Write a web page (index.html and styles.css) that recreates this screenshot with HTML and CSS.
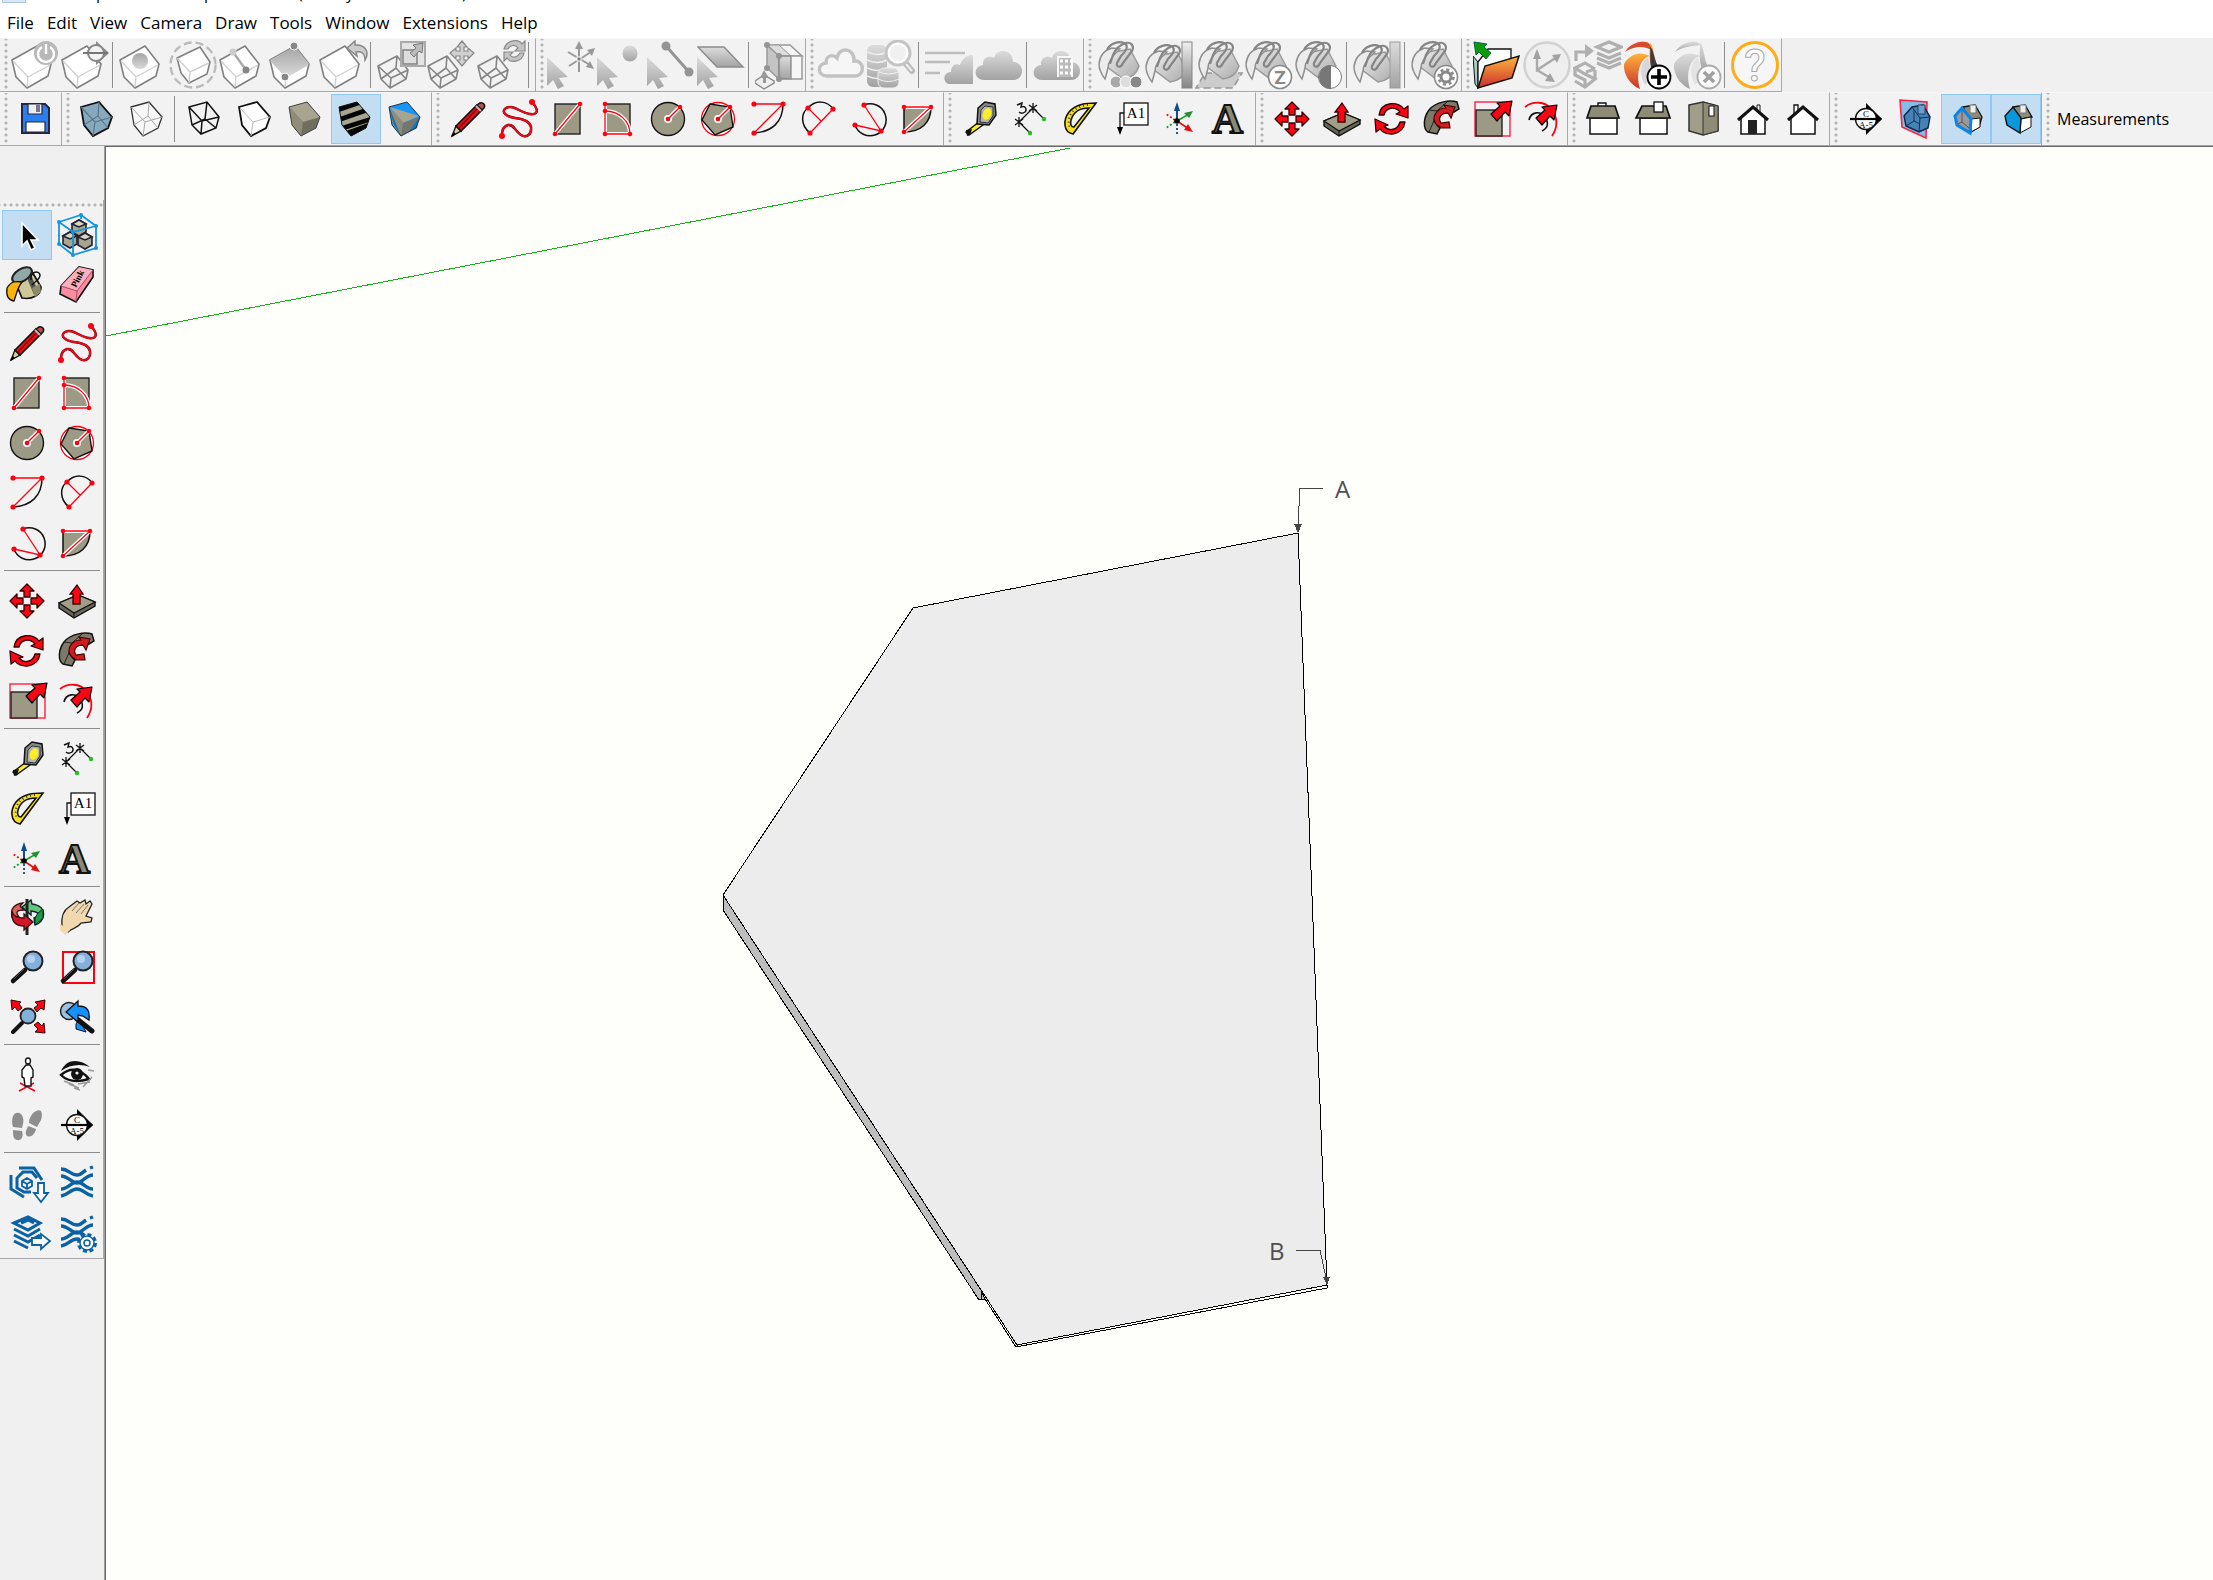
FILE: index.html
```html
<!DOCTYPE html>
<html lang="en">
<head>
<meta charset="utf-8">
<title>Modeler</title>
<link rel="stylesheet" href="styles.css">
</head>
<body>
<svg class="sprite" aria-hidden="true">
<defs>
<linearGradient id="gg" x1="0" y1="0" x2="0" y2="1"><stop offset="0" stop-color="#dcdcdc"/><stop offset="1" stop-color="#a2a2a2"/></linearGradient>
<linearGradient id="gb" x1="0" y1="0" x2="1" y2="1"><stop offset="0" stop-color="#eeeeee"/><stop offset="1" stop-color="#aaaaaa"/></linearGradient>
<linearGradient id="gd" x1="0" y1="0" x2="0" y2="1"><stop offset="0" stop-color="#f0f0f0"/><stop offset="1" stop-color="#858585"/></linearGradient>
<linearGradient id="gt" x1="0" y1="0" x2="0" y2="1"><stop offset="0" stop-color="#a4a4a4"/><stop offset="1" stop-color="#dadada"/></linearGradient>
<linearGradient id="gf" x1="0" y1="0" x2="0" y2="1"><stop offset="0" stop-color="#ffb43c"/><stop offset="1" stop-color="#c9302c"/></linearGradient>
<clipPath id="cubeclip"><path d="M8 13L26 8L39 23L35 34L20 42L11 31Z"/></clipPath>

<g id="cubeg"><path d="M1 20L26 6L40 24L37 36L16 48L5 37Z" fill="#fff" stroke="#808080" stroke-width="1.6" stroke-linejoin="round"/><path d="M2 21L17 37L39 25M17 37L16 47" fill="none" stroke="#d0d0d0" stroke-width="1.4"/></g>
<g id="wireg" fill="none" stroke="#858585" stroke-width="1.6" stroke-linejoin="round"><path d="M1 26L20 16L31 30L29 39L13 48L4 39ZM1 26L14 38L31 30M14 38L13 48M20 16L19 28L4 39M19 28L29 39"/></g>
<g id="cursorg"><path d="M0 17V46L6 40L11 49L17 46L12 38L21 37Z" fill="url(#gg)"/></g>
<g id="bucketg"><path d="M11 26L20 12L35 9L44 26C42 33 36 38 28 39Z" fill="url(#gb)" stroke="#999" stroke-width="1.4"/><path d="M4 24C5 15 9 10 17 8L25 9C17 16 13 22 13 28C12 32 11 36 10 39C7 35 4 29 4 24Z" fill="#ececec" stroke="#909090" stroke-width="1.5"/><path d="M12 10C15 3 24 1 29 3C35 6 30 12 26 16L22 23C21 28 26 28 28 23L37 11C40 5 35 2 31 3C24 5 20 10 18 15L15 24" fill="none" stroke="#858585" stroke-width="2.2"/></g>
<g id="vg"><path d="M2 12C10 0 26 0 27 5C19 6 9 7 2 12Z"/><path d="M1 24C6 15 16 10 27 16C18 18 12 32 17 49C7 45 0 34 1 24Z"/><path d="M27 3C31 5 31 22 36 28L31 32C25 24 27 12 27 3Z"/></g>
<path id="redarrow" d="M45 7L42 22L38 18L30 27L24 20L33 12L30 9Z" fill="#fa0514" stroke="#000" stroke-width="1.2" stroke-linejoin="round"/>
<path id="cloud" d="M9 38C-2 38-2 24 8 23C7 15 15 13 19 16C21 6 38 6 38 20C50 20 50 38 38 38Z"/>
</defs>

<symbol id="solid-toggle" viewBox="0 0 50 50"><use href="#cubeg"/><circle cx="35" cy="13" r="12" fill="#b8b8b8"/><path d="M31 7A8 8 0 1 0 39 7M35 4V14" fill="none" stroke="#fff" stroke-width="2.4"/></symbol>
<symbol id="solid-section" viewBox="0 0 50 50"><use href="#cubeg"/><path d="M35 1L48 13L35 25Z" fill="#888"/><circle cx="35" cy="13" r="8" fill="#f4f4f4" stroke="#888" stroke-width="2"/><path d="M22 13H47" stroke="#777" stroke-width="2"/></symbol>
<symbol id="solid-sphere" viewBox="0 0 50 50"><use href="#cubeg"/><circle cx="21" cy="21" r="8" fill="url(#gt)"/></symbol>
<symbol id="solid-outer" viewBox="0 0 50 50"><circle cx="24" cy="25" r="22.500" fill="none" stroke="#bbb" stroke-width="2.400" stroke-dasharray="8 4"/><path d="M8 18L31 7L41 22L38 34L20 43L12 33Z" fill="#fff" stroke="#808080" stroke-width="1.600"/><path d="M8 18L21 32L40 23M21 32L20 43" fill="none" stroke="#ccc" stroke-width="1.400"/></symbol>
<symbol id="solid-edge" viewBox="0 0 50 50"><use href="#cubeg"/><path d="M14 12L27 30" stroke="#aaa" stroke-width="2.400"/><circle cx="14" cy="12" r="3.500" fill="#ccc"/><circle cx="27" cy="30" r="3.500" fill="#858585"/></symbol>
<symbol id="solid-face" viewBox="0 0 50 50"><use href="#cubeg"/><path d="M1 20L26 6L40 24L17 37Z" fill="url(#gt)"/><g fill="#888" stroke="#fff"><circle cx="25" cy="6" r="4"/><circle cx="16" cy="37" r="4"/></g></symbol>
<symbol id="solid-undo" viewBox="0 0 50 50"><use href="#cubeg"/><path d="M28 8L36 1V5C46 4 51 12 46 20C46 13 42 11 37 12L38 16Z" fill="#ccc" stroke="#888" stroke-width="1.500"/></symbol>
<symbol id="wire-scale" viewBox="0 0 50 50"><use href="#wireg"/><rect x="24" y="2" width="24" height="24" fill="#e4e4e4" stroke="#aaa" stroke-width="2"/><rect x="26" y="10" width="14" height="14" fill="#ddd" stroke="#888" stroke-width="1.600"/><path d="M46 3L45 13L42 11L37 17L33 13L39 8L36 5Z" fill="#bbb" stroke="#777"/></symbol>
<symbol id="wire-move" viewBox="0 0 50 50"><use href="#wireg"/><path d="M35 1L40 7H37V11H41V8L47 13L41 19V16H37V20H40L35 26L30 20H33V16H29V19L23 13L29 8V11H33V7H30Z" fill="#d0d0d0" stroke="#888" stroke-width="1.200"/></symbol>
<symbol id="wire-rotate" viewBox="0 0 50 50"><use href="#wireg"/><g fill="#c4c4c4" stroke="#888" stroke-width="1.200"><path d="M27 9C30-1 42-1 45 4L48 1V11H38L41 8C38 4 33 5 31 9Z"/><path d="M47 13C45 23 33 23 30 18L27 21V12H36L33 15C36 19 41 17 43 13Z"/></g></symbol>

<symbol id="pick-axes" viewBox="0 0 50 50"><use href="#cursorg"/><g stroke="#999" stroke-width="2"><path d="M32 32V6M21 12L43 25M22 26L44 12"/></g><path d="M32 1L36 9H28ZM48 8L45 16L40 10ZM47 29L39 27L43 21Z" fill="#999"/><rect x="30" y="17" width="4" height="4" fill="#777" stroke="#fff"/></symbol>
<symbol id="pick-point" viewBox="0 0 50 50"><use href="#cursorg"/><ellipse cx="33" cy="13.500" rx="7.500" ry="8" fill="url(#gg)"/></symbol>
<symbol id="pick-edge" viewBox="0 0 50 50"><use href="#cursorg"/><path d="M19 6L42 32" stroke="#949494" stroke-width="3"/><circle cx="19" cy="6" r="4.500" fill="#949494"/><circle cx="42" cy="32" r="4.500" fill="#949494"/></symbol>
<symbol id="pick-face" viewBox="0 0 50 50"><use href="#cursorg"/><path d="M1 7H27L46 27H20Z" fill="url(#gg)" stroke="#8c8c8c" stroke-width="1.500"/></symbol>
<symbol id="stretch" viewBox="0 0 50 50"><path d="M12 5H35L47 16H24Z" fill="#f4f4f4" stroke="#999" stroke-width="1.500"/><path d="M12 5L24 5L36 16H24Z" fill="#ddd" stroke="#999"/><path d="M12 5L24 16V39L12 28Z" fill="#c4c4c4" stroke="#999" stroke-width="1.500"/><path d="M24 16H36V39H24Z" fill="url(#gg)" stroke="#888" stroke-width="1.500"/><path d="M36 16H47V39H36Z" fill="#f6f6f6" stroke="#999" stroke-width="1.500"/><g fill="#949494"><circle cx="12" cy="5" r="3"/><circle cx="24" cy="16" r="3"/><circle cx="12" cy="28" r="3"/><circle cx="24" cy="39" r="3"/></g><path d="M0 41L9 35L19 41V43L9 49L0 43Z" fill="#eee" stroke="#888" stroke-width="1.400"/><path d="M9 30L14 38H11V43H8V38H5Z" fill="#999"/></symbol>

<symbol id="cloud-line" viewBox="0 0 50 50"><path d="M10 36C0 36 0 24 9 23C9 15 16 14 20 18C22 6 38 8 37 21C48 20 48 36 38 36Z" fill="#f6f6f6" stroke="#c2c2c2" stroke-width="3.400"/></symbol>
<symbol id="data-search" viewBox="0 0 50 50"><g fill="url(#gg)"><rect y="5" width="20" height="42" rx="6"/></g><path d="M0 12Q10 17 20 12M0 20Q10 25 20 20M0 28Q10 33 20 28M0 36Q10 41 20 36" stroke="#eee" stroke-width="1.500" fill="none"/><rect x="11" y="28" width="21" height="20" rx="6" fill="url(#gg)" stroke="#eee"/><path d="M11 39Q21 44 32 39M12 32Q21 36 31 32" stroke="#eee" fill="none"/><path d="M36 20L45 31" stroke="#bbb" stroke-width="6" stroke-linecap="round"/><path d="M39 24L45 31" stroke="#eee" stroke-width="2"/><circle cx="31" cy="13" r="12" fill="#fff" stroke="#c4c4c4" stroke-width="3"/><circle cx="31" cy="13" r="8" fill="#f0f0f0"/></symbol>
<symbol id="cloud-list" viewBox="0 0 50 50"><path d="M0 13H40M0 22H25M0 33H15" stroke="#bdbdbd" stroke-width="2.600"/><path d="M24 44C17 42 18 32 26 32C26 25 31 23 35 25C38 17 43 15 48 15V44Z" fill="url(#gg)"/></symbol>
<symbol id="cloud-solid" viewBox="0 0 50 50"><use href="#cloud" y="2" fill="url(#gg)"/></symbol>
<symbol id="cloud-building" viewBox="0 0 50 50"><use href="#cloud" y="2" fill="url(#gg)"/><path d="M25 37V17H39V37" fill="#bbb" stroke="#f8f8f8" stroke-width="2"/><path d="M27 21H39M27 27H39M27 33H39" stroke="#fff" stroke-width="3" stroke-dasharray="3 2"/></symbol>

<symbol id="fill-dots" viewBox="0 0 50 50"><use href="#bucketg"/><g stroke="#fff"><circle cx="21" cy="42" r="6" fill="#aaa"/><circle cx="31" cy="42" r="6" fill="#ddd"/><circle cx="41" cy="42" r="6" fill="#888"/></g></symbol>
<symbol id="fill-gradient" viewBox="0 0 50 50"><use href="#bucketg" x="-3" y="3"/><rect x="37" y="2" width="10" height="46" fill="url(#gd)" stroke="#858585"/></symbol>
<symbol id="fill-plane" viewBox="0 0 50 50"><path d="M10 33H47L38 48H1Z" fill="#ccc" stroke="#999" stroke-width="1.600" stroke-dasharray="7 4"/><use href="#bucketg"/></symbol>
<symbol id="fill-contrast" viewBox="0 0 50 50"><use href="#bucketg" x="-3"/><circle cx="35" cy="37" r="11.500" fill="#fff" stroke="#777"/><path d="M36 25V49A12 12 0 0 1 36 25Z" fill="#777"/></symbol>
<symbol id="fill-flat" viewBox="0 0 50 50"><use href="#bucketg" x="-3" y="3"/><rect x="37" y="2" width="10" height="46" fill="url(#gg)" stroke="#999"/></symbol>
<symbol id="fill-gear" viewBox="0 0 50 50"><use href="#bucketg" x="-3"/><circle cx="35" cy="37" r="11.500" fill="#fff" stroke="#888" stroke-width="1.600"/><circle cx="35" cy="37" r="5" fill="none" stroke="#888" stroke-width="3"/><circle cx="35" cy="37" r="7.500" fill="none" stroke="#888" stroke-width="2.500" stroke-dasharray="3 2.900"/></symbol>

<symbol id="folder" viewBox="0 0 50 50"><path d="M0 16L5 22V48L2 44Z" fill="#a9ccc4" stroke="#111"/><path d="M5 48V22L15 9H38V25Z" fill="#fff" stroke="#111" stroke-width="1.300"/><path d="M5 48L12 26L46 16L39 38Z" fill="url(#gf)" stroke="#111" stroke-width="1.500"/><path d="M1 2L14 4L11 7L18 13L13 19L6 12L3 15Z" fill="#0a9a0a" stroke="#064" stroke-width="1"/></symbol>
<symbol id="axes-off" viewBox="0 0 50 50"><circle cx="24" cy="25" r="22.500" fill="#efefef" stroke="#d2d2d2" stroke-width="2.600"/><path d="M14 12V30L34 17M14 30L29 39" fill="none" stroke="#aaa" stroke-width="2.400"/><path d="M14 9L18 19H10ZM38 14L34 23L29 15ZM32 42L22 41L27 33Z" fill="#a2a2a2"/></symbol>
<symbol id="layers-off" viewBox="0 0 50 50"><g fill="none" stroke="#b0b0b0" stroke-width="3.200"><path d="M3 21V12H13"/><path d="M24 7L36 2L48 7L36 12ZM24 13L36 18L48 13M24 18L36 23L48 18M24 23L36 28L48 23"/><path d="M22 29L12 23L2 28L12 34L22 39L12 47L2 41M2 29V35L12 40V46M22 29L13 32M22 38V30"/></g><path d="M12 4L21 11L12 18Z" fill="#b0b0b0"/></symbol>
<symbol id="v-add" viewBox="0 0 50 50"><g fill="url(#gf)"><use href="#vg"/></g><path d="M3 10C12 0 25 0 27 5L29 10C20 5 10 7 3 10Z" fill="#d84a30"/><path d="M27 7C31 9 31 22 36 27L31 35C26 30 28 15 27 7Z" fill="#3c3c40"/><path d="M25 17C17 22 16 36 22 45L30 36Z" fill="#d8d8dc"/><circle cx="36" cy="37" r="11.500" fill="#fff" stroke="#000" stroke-width="1.800"/><path d="M28 37H44M36 29V45" stroke="#000" stroke-width="3.600"/></symbol>
<symbol id="v-remove" viewBox="0 0 50 50"><g fill="url(#gg)"><use href="#vg"/></g><path d="M25 17C17 22 16 36 22 45L30 36Z" fill="#e4e4e4"/><circle cx="36" cy="37" r="11.500" fill="#fafafa" stroke="#aaa" stroke-width="1.800"/><path d="M31 32L41 42M41 32L31 42" stroke="#a0a0a0" stroke-width="3.600"/></symbol>

<symbol id="save" viewBox="0 0 50 50"><path d="M11 10H34L38 14V39H11Z" fill="#2a7ff0" stroke="#262640" stroke-width="2"/><path d="M17 10H31V20H17Z" fill="#eee" stroke="#262640" stroke-width="1.200"/><rect x="25" y="11" width="4" height="7" fill="#777788"/><path d="M15 28H34V38H15Z" fill="#fff" stroke="#262640" stroke-width="1.200"/></symbol>
<symbol id="cube-xray" viewBox="0 0 50 50"><path d="M8 13L26 8L39 23L35 34L20 42L11 31Z" fill="#86a9bd" stroke="#111" stroke-width="1.800"/><path d="M8 13L22 28L39 23M22 28L20 42" fill="none" stroke="#58778a" stroke-width="1.200"/><path d="M26 8L25 22L11 31M25 22L35 34" fill="none" stroke="#4e6a7c"/></symbol>
<symbol id="cube-back" viewBox="0 0 50 50"><path d="M8 13L26 8L39 23L35 34L20 42L11 31Z" fill="#f8f8f8" stroke="#333" stroke-width="1.300"/><path d="M8 13L22 28L39 23M22 28L20 42M26 8L25 22L11 31M25 22L35 34" fill="none" stroke="#aaa"/></symbol>
<symbol id="cube-wire" viewBox="0 0 50 50"><path d="M8 13L26 8L38 23L35 34L20 40L11 31ZM8 13L21 27L38 23M21 27L20 40M26 8L24 25L11 31M24 25L35 34" fill="none" stroke="#111" stroke-width="1.500"/></symbol>
<symbol id="cube-hidden" viewBox="0 0 50 50"><path d="M8 13L26 8L39 23L35 34L20 42L11 31Z" fill="#fff" stroke="#111" stroke-width="1.800"/><path d="M9 14L22 28L39 23M22 28L20 42" fill="none" stroke="#bbb"/></symbol>
<symbol id="cube-shaded" viewBox="0 0 50 50"><path d="M8 13L26 8L39 23L35 34L20 42L11 31Z" fill="#706e5e"/><path d="M8 13L26 8L39 23L22 28Z" fill="#a7a48f"/><path d="M8 13L22 28L20 42L11 31Z" fill="#8f8c78"/><path d="M8 13L26 8L39 23L35 34L20 42L11 31Z" fill="none" stroke="#444"/></symbol>
<symbol id="cube-texture" viewBox="0 0 50 50"><g clip-path="url(#cubeclip)"><rect width="50" height="50" fill="#a7a48f"/><path d="M7 16L30 8M10 25L36 16M12 34L40 25M16 39L38 31M18 43L38 35" stroke="#050505" stroke-width="4.500"/></g><path d="M8 13L26 8L39 23L35 34L20 42L11 31Z" fill="none" stroke="#111"/></symbol>
<symbol id="cube-mono" viewBox="0 0 50 50"><path d="M8 13L26 8L39 23L35 34L20 42L11 31Z" fill="#1496fa"/><path d="M9 13L38 22L22 29Z" fill="#a7a48f"/><path d="M22 29L39 23L35 34L20 42Z" fill="#78766a"/><path d="M38 23L36 34L28 38Z" fill="#0a78d0"/><path d="M8 13L12 31L20 42L22 28Z" fill="#8f8c78"/><path d="M8 13L13 31L20 42Z" fill="#1070c0"/><path d="M8 13L26 8L39 23L35 34L20 42L11 31Z" fill="none" stroke="#234"/></symbol>

<symbol id="pencil" viewBox="0 0 50 50"><path d="M9 42L13 32L18 37Z" fill="#d8d0a0" stroke="#111" stroke-width="1.300"/><path d="M13 32L34 11L39 16L18 37Z" fill="#e01014" stroke="#111" stroke-width="1.600"/><path d="M16 34L36 13" stroke="#8e0a10" stroke-width="1.600"/><path d="M34 11L37 9C40 8 43 11 41 14L39 16Z" fill="#b8504c" stroke="#111" stroke-width="1.500"/><path d="M33 12L38 17" stroke="#bbb" stroke-width="2"/><path d="M9 42L12 39" stroke="#000" stroke-width="2"/></symbol>
<symbol id="freehand" viewBox="0 0 50 50"><path d="M39 8C47 17 44 21 37 20C28 19 20 10 13 14C7 18 14 23 22 24C31 25 37 28 38 33C39 41 33 44 28 41C21 36 21 30 15 31C9 33 9 38 9 42" fill="none" stroke="#600008" stroke-width="2.500"/><path d="M39 8C47 17 44 21 37 20C28 19 20 10 13 14C7 18 14 23 22 24C31 25 37 28 38 33C39 41 33 44 28 41C21 36 21 30 15 31C9 33 9 38 9 42" fill="none" stroke="#f00818" stroke-width="1.800"/><circle cx="39" cy="8" r="3" fill="#f01"/><circle cx="9" cy="42" r="3" fill="#f01"/></symbol>
<symbol id="rect" viewBox="0 0 50 50"><rect x="12" y="10" width="25" height="30" fill="#9c9a84" stroke="#222" stroke-width="1.400"/><path d="M12 40L37 10" stroke="#fff" stroke-width="4"/><path d="M12 40L37 10" stroke="#f01" stroke-width="1.300"/><circle cx="12" cy="40" r="2.300" fill="#f01"/><circle cx="37" cy="10" r="2.300" fill="#f01"/></symbol>
<symbol id="rotrect" viewBox="0 0 50 50"><rect x="12" y="10" width="25" height="30" fill="#9c9a84" stroke="#222" stroke-width="1.400"/><path d="M12 10V40H37C37 27 26 17 12 17" fill="none" stroke="#fff" stroke-width="4"/><path d="M12 10V40H37C37 27 26 17 12 17" fill="none" stroke="#f01" stroke-width="1.300"/><g fill="#f01"><circle cx="12" cy="10" r="2.300"/><circle cx="12" cy="17" r="2.300"/><circle cx="12" cy="40" r="2.300"/><circle cx="37" cy="40" r="2.300"/></g></symbol>
<symbol id="circle" viewBox="0 0 50 50"><circle cx="25" cy="25" r="16.500" fill="#9c9a84" stroke="#111" stroke-width="1.400"/><path d="M25 25L37 13" stroke="#fff" stroke-width="4"/><circle cx="25" cy="25" r="4" fill="#fff"/><path d="M25 25L37 13" stroke="#f01" stroke-width="1.500"/><circle cx="25" cy="25" r="2.300" fill="#f01"/><circle cx="37" cy="13" r="2.300" fill="#f01"/></symbol>
<symbol id="polygon" viewBox="0 0 50 50"><circle cx="25" cy="25" r="16.500" fill="#fff" stroke="#f01" stroke-width="1.300"/><path d="M17 10L37 13L40 33L22 41L9 26Z" fill="#9c9a84" stroke="#111" stroke-width="1.400"/><path d="M25 25L37 13" stroke="#fff" stroke-width="4"/><circle cx="25" cy="25" r="4" fill="#fff"/><path d="M25 25L37 13" stroke="#f01" stroke-width="1.500"/><circle cx="25" cy="25" r="2.300" fill="#f01"/><circle cx="37" cy="13" r="2.300" fill="#f01"/></symbol>
<symbol id="arc" viewBox="0 0 50 50"><path d="M40 10C40 28 29 38 11 39" fill="none" stroke="#111" stroke-width="1.500"/><path d="M11 10H40L11 39" fill="none" stroke="#f01" stroke-width="1.300"/><g fill="#f01"><circle cx="11" cy="10" r="2.600"/><circle cx="40" cy="10" r="2.600"/><circle cx="11" cy="39" r="2.600"/></g></symbol>
<symbol id="arc2" viewBox="0 0 50 50"><path d="M17 39C7 31 8 19 15 14C22 6 34 6 40 15" fill="none" stroke="#111" stroke-width="1.500"/><path d="M40 15L17 39M28 27L15 14" stroke="#f01" stroke-width="1.300"/><g fill="#f01"><circle cx="40" cy="15" r="2.600"/><circle cx="17" cy="39" r="2.600"/><circle cx="15" cy="14" r="2.600"/></g></symbol>
<symbol id="arc3" viewBox="0 0 50 50"><path d="M21 11A16 16 0 1 1 12 31" fill="none" stroke="#111" stroke-width="1.500"/><path d="M21 11L38 37L12 31" fill="none" stroke="#f01" stroke-width="1.300"/><g fill="#f01"><circle cx="21" cy="11" r="2.600"/><circle cx="38" cy="37" r="2.600"/><circle cx="12" cy="31" r="2.600"/></g></symbol>
<symbol id="pie" viewBox="0 0 50 50"><path d="M11 13H38C38 29 28 38 11 38Z" fill="#9c9a84" stroke="#111" stroke-width="1.500"/><path d="M11 13H38L11 38" fill="none" stroke="#fff" stroke-width="4"/><path d="M11 13H38L11 38" fill="none" stroke="#f01" stroke-width="1.300"/><g fill="#f01"><circle cx="11" cy="13" r="2.300"/><circle cx="38" cy="13" r="2.300"/><circle cx="11" cy="38" r="2.300"/></g></symbol>

<symbol id="tape" viewBox="0 0 50 50"><path d="M11 38L24 28L28 31L14 41Z" fill="#fcee20" stroke="#111" stroke-width="1.400"/><path d="M11 36L17 35L15 41L12 42Z" fill="#111"/><path d="M23 14L30 8L40 10L41 21L34 31L22 30Z" fill="#888" stroke="#111" stroke-width="1.500"/><path d="M26 16L30 12L38 13L38 22L33 29L25 28Z" fill="#b4b4b4" stroke="#333"/><ellipse cx="32" cy="20" rx="4" ry="6" fill="#fff020" transform="rotate(22 32 20)"/></symbol>
<symbol id="dimension" viewBox="0 0 50 50"><path d="M14 28L28 14M14 28L25 39M28 14L39 25M14 23V33M10 25L18 31M28 9V19M24 11L32 17M10 31L18 25M24 17L32 11" stroke="#111" stroke-width="1.300"/><path d="M12 11L17 9L16 13C21 11 22 16 20 18C17 20 15 19 14 18" fill="none" stroke="#111" stroke-width="1.400"/><circle cx="25" cy="39" r="2.200" fill="#20c020"/><circle cx="39" cy="25" r="2.200" fill="#20c020"/></symbol>
<symbol id="protractor" viewBox="0 0 50 50"><path d="M41 9L18 40C8 38 8 26 14 18C21 10 31 9 41 9ZM34 14C24 14 18 19 16 26C15 30 16 33 19 33Z" fill="#f6e020" fill-rule="evenodd" stroke="#111" stroke-width="1.600"/><path d="M33 11C20 12 10 21 15 35" fill="none" stroke="#333" stroke-width="2" stroke-dasharray="1 3"/></symbol>
<symbol id="axes" viewBox="0 0 50 50"><path d="M22 27V14" stroke="#104a90" stroke-width="2"/><path d="M22 8L25 17H19Z" fill="#104a90"/><path d="M22 30V41" stroke="#104a90" stroke-width="1.800" stroke-dasharray="2 2"/><path d="M22 27L34 20" stroke="#20a020" stroke-width="1.600"/><path d="M38 17L34 24L29 19Z" fill="#209030"/><path d="M20 28L11 34" stroke="#209030" stroke-width="1.800" stroke-dasharray="2 2"/><path d="M22 27L34 35" stroke="#e01010" stroke-width="1.600"/><path d="M38 38L29 36L33 30Z" fill="#e01010"/><path d="M20 26L11 20" stroke="#e01010" stroke-width="1.800" stroke-dasharray="2 2"/><circle cx="22" cy="27" r="2.800" fill="#000"/></symbol>

<symbol id="move" viewBox="0 0 50 50"><g fill="#fa0514" stroke="#300" stroke-width="1.300" stroke-linejoin="round"><path d="M25 8L32 15H28V21H22V15H18Z"/><path d="M25 42L18 35H22V29H28V35H32Z"/><path d="M8 25L15 18V22H21V28H15V32Z"/><path d="M42 25L35 32V28H29V22H35V18Z"/></g></symbol>
<symbol id="pushpull" viewBox="0 0 50 50"><path d="M7 27L26 19L43 26V30L22 42L7 32Z" fill="#68665a" stroke="#111" stroke-width="1.400"/><path d="M7 27L26 19L43 26L22 37Z" fill="#a09e88" stroke="#111" stroke-width="1.300"/><path d="M22 36V42" stroke="#111"/><path d="M25 9L31 18H28V28H21V18H18Z" fill="#fa0514" stroke="#300" stroke-width="1.300"/></symbol>
<symbol id="rotate" viewBox="0 0 50 50"><g fill="#fa0514" stroke="#300" stroke-width="1.300" stroke-linejoin="round"><path d="M12 21C14 7 32 7 37 15L41 12V24L29 20L33 18C28 12 19 13 17 21Z"/><path d="M38 28C36 42 18 43 13 35L9 38L8 25L21 31L17 32C22 38 31 36 33 28Z"/></g></symbol>
<symbol id="followme" viewBox="0 0 50 50"><path d="M40 8C34 6 19 7 12 16C6 24 6 35 11 38L20 40L23 34C17 30 18 24 23 20L37 18L42 15Z" fill="#7c7a68" stroke="#111" stroke-width="1.500"/><path d="M12 16L20 17L30 8M12 38L16 29L20 17" fill="none" stroke="#222"/><path d="M19 30C14 24 19 14 29 14L27 11L38 13L34 24L31 19C23 19 21 25 24 29L32 28L33 34L24 34Z" fill="#d01c20" stroke="#400" stroke-width="1.200"/></symbol>
<symbol id="scale" viewBox="0 0 50 50"><rect x="8" y="8" width="35" height="34" fill="none" stroke="#f24" stroke-width="1.400"/><rect x="9" y="16" width="26" height="26" fill="#9c9a84" stroke="#222" stroke-width="1.400"/><use href="#redarrow"/></symbol>
<symbol id="offset" viewBox="0 0 50 50"><path d="M8 13C16 7 28 7 34 15C41 23 41 33 35 42" fill="none" stroke="#f01" stroke-width="1.800"/><path d="M12 26C14 17 24 17 28 23C32 29 31 34 25 37" fill="none" stroke="#111" stroke-width="1.600"/><use href="#redarrow" x="-5" y="4"/></symbol>

<symbol id="house-top" viewBox="0 0 50 50"><path d="M19 9H27V13H19Z" fill="#fff" stroke="#111" stroke-width="1.400"/><rect x="11" y="24" width="27" height="16" fill="#fff" stroke="#111" stroke-width="1.500"/><path d="M12 12H36L40 24H8Z" fill="#8e8b76" stroke="#111" stroke-width="1.700"/></symbol>
<symbol id="house-front" viewBox="0 0 50 50"><rect x="11" y="24" width="27" height="16" fill="#fff" stroke="#111" stroke-width="1.500"/><path d="M13 12H37L41 24H7Z" fill="#8e8b76" stroke="#111" stroke-width="1.700"/><rect x="25" y="8" width="9" height="10" fill="#fff" stroke="#111" stroke-width="1.300"/></symbol>
<symbol id="house-roof" viewBox="0 0 50 50"><path d="M10 11L24 8L39 12V37L24 41L10 37Z" fill="#a09e88" stroke="#333" stroke-width="1.500"/><path d="M24 8L39 12V37L24 41Z" fill="#8e8b76" stroke="#333"/><rect x="30" y="12" width="5" height="10" fill="#fff" stroke="#111"/></symbol>
<symbol id="house-right" viewBox="0 0 50 50"><path d="M28 11H31V18H28Z" fill="#fff" stroke="#111"/><path d="M12 24L24 13L36 24V40H12Z" fill="#fff" stroke="#111" stroke-width="1.500"/><rect x="19" y="26" width="9" height="14" fill="#222"/><path d="M9 26L24 13L39 26" fill="none" stroke="#111" stroke-width="3"/></symbol>
<symbol id="house-left" viewBox="0 0 50 50"><path d="M15 20V11H19V17" fill="#fff" stroke="#111" stroke-width="1.300"/><path d="M12 24L24 13L36 24V40H12Z" fill="#fff" stroke="#111" stroke-width="1.500"/><path d="M9 26L24 13L39 26" fill="none" stroke="#111" stroke-width="3"/></symbol>
<symbol id="sectionmark" viewBox="0 0 50 50"><path d="M25 9L41 25L25 41Z"/><circle cx="25" cy="25" r="10.500" fill="#fff" stroke="#111" stroke-width="1.400"/><path d="M9 25H40" stroke="#000" stroke-width="2.200"/><path d="M35 20L41 25L35 30Z"/></symbol>
<symbol id="plane" viewBox="0 0 50 50"><path d="M9 6L36 8L35 44L11 33Z" fill="#86bce8" stroke="#f24" stroke-width="1.600"/><path d="M13 22L21 13L32 11L39 23L37 34L28 38L15 32Z" fill="#4583b4" stroke="#124" stroke-width="1.400"/><path d="M21 13L29 24L28 38M29 24L39 23M15 32L23 27L29 30M23 27V16" fill="none" stroke="#135"/><path d="M27 11H34V20H27Z" fill="#6aa0cc" stroke="#246"/></symbol>
<symbol id="cut" viewBox="0 0 50 50"><path d="M22 13L34 11L41 23L38 33L30 38L28 24Z" fill="#8e8b76" stroke="#111" stroke-width="1.300"/><path d="M30 25L39 24V33L30 38Z" fill="#fff" stroke="#111"/><path d="M14 22L21 14L30 25L29 39L16 31Z" fill="#9a9a9e" stroke="#0a84e8" stroke-width="3"/><path d="M21 17V28L28 34M21 28L17 30" fill="none" stroke="#555"/><path d="M29 11H35V19H29Z" fill="#eee" stroke="#777"/></symbol>
<symbol id="fill" viewBox="0 0 50 50"><path d="M22 13L34 11L41 23L30 25Z" fill="#8e8b76" stroke="#111" stroke-width="1.300"/><path d="M30 25L40 23V33L29 39Z" fill="#fff" stroke="#111"/><path d="M14 22L22 13L30 24L29 39L16 31Z" fill="#0a98dc" stroke="#111" stroke-width="1.400"/><path d="M29 11H35V19H29Z" fill="#eee" stroke="#777"/></symbol>

<symbol id="select" viewBox="0 0 50 50"><path d="M20 13V36L25 31L29 40L33 38L29 30H36Z" fill="#000" stroke="#fff" stroke-width="1.600"/></symbol>
<symbol id="component" viewBox="0 0 50 50"><g stroke="#222234" stroke-width="1.600"><path id="cb" d="M20 14L27 10L34 14V22L27 26L20 22Z" fill="#a7a48f"/><use href="#cb" x="-9" y="12"/><use href="#cb" x="6" y="13"/><path d="M20 14L27 17L34 14L27 10ZM11 26L18 29L25 26L18 22ZM26 27L33 30L40 27L33 23Z" fill="#d8d6be"/></g><path d="M7 12L29 5L44 16V38L21 45L7 34ZM7 12L21 22L44 16M21 22V45M29 5V9" fill="none" stroke="#1496dc" stroke-width="1.800"/><g fill="#1496dc"><circle cx="7" cy="12" r="2"/><circle cx="29" cy="5" r="2"/><circle cx="44" cy="16" r="2"/><circle cx="44" cy="38" r="2"/><circle cx="21" cy="45" r="2"/><circle cx="7" cy="34" r="2"/><circle cx="21" cy="22" r="2"/></g></symbol>
<symbol id="paint" viewBox="0 0 50 50"><path d="M12 19L29 10L39 27C39 35 30 40 20 38Z" fill="#cfc89a" stroke="#111" stroke-width="1.700"/><path d="M26 14L34 33" stroke="#555" stroke-width="5"/><path d="M30 28L38 24L39 32L33 37Z" fill="#8d8a68"/><ellipse cx="20" cy="15" rx="11" ry="6" transform="rotate(-32 20 15)" fill="#8fa8a8" stroke="#222" stroke-width="2"/><path d="M5 28C9 21 14 21 20 22C15 28 14 36 12 41C6 40 4 35 5 28Z" fill="#fcb408" stroke="#111" stroke-width="1.300"/><path d="M29 20C28 11 37 10 38 15C38 20 33 21 30 25" fill="none" stroke="#111" stroke-width="1.500"/></symbol>

<symbol id="orbit" viewBox="0 0 50 50"><path d="M30 12C47 14 43 31 33 33L32 26C38 24 38 20 29 19V23L20 15L29 8Z" fill="#60c878" stroke="#123" stroke-width="1.400"/><path d="M36 21L41 17V26L33 33V26Z" fill="#18a040" stroke="#123"/><path d="M25 7V43" stroke="#222" stroke-width="3"/><path d="M10 25C8 16 13 12 21 11L18 14L22 18C15 18 13 20 17 25Z" fill="#e06058" stroke="#311" stroke-width="1.300"/><path d="M10 19C11 25 17 26 22 26V22L31 30L22 38V34C13 34 9 29 10 19Z" fill="#d01828" stroke="#311" stroke-width="1.300"/></symbol>
<symbol id="pan" viewBox="0 0 50 50"><path d="M10 34C9 24 12 18 17 15L25 9L28 11L33 8L34 12L38 9L40 12L34 24L40 26L39 30L29 31C26 36 20 36 16 40Z" fill="#f2d8ae" stroke="#222" stroke-width="1.300"/><path d="M20 19L27 11M24 21L32 12M29 22L36 13" stroke="#777" fill="none"/><path d="M8 32L18 38L13 43L8 38Z" fill="#f2d8ae"/></symbol>
<symbol id="zoom" viewBox="0 0 50 50"><path d="M23 28L11 39" stroke="#111" stroke-width="4.500" stroke-linecap="round"/><path d="M22 27L12 37" stroke="#555"/><circle cx="31" cy="19" r="9.500" fill="#85b0dc" stroke="#222" stroke-width="2"/><circle cx="29" cy="17" r="4" fill="#b4d2ee"/></symbol>
<symbol id="zoomwin" viewBox="0 0 50 50"><rect x="11" y="10" width="31" height="31" fill="none" stroke="#f01" stroke-width="2"/><use href="#zoom" width="50" height="50"/></symbol>
<symbol id="zoomext" viewBox="0 0 50 50"><path d="M20 31L11 40" stroke="#111" stroke-width="4" stroke-linecap="round"/><circle cx="26" cy="24" r="7.500" fill="#85b0dc" stroke="#222" stroke-width="1.800"/><g fill="#fa0514" stroke="#300"><path d="M9 8L19 10L17 12L20 16L16 19L13 15L10 18Z"/><path d="M43 8L42 18L39 16L35 20L32 16L36 13L33 10Z"/><path d="M43 41L33 40L36 37L32 33L36 30L40 34L42 31Z"/></g></symbol>
<symbol id="zoomprev" viewBox="0 0 50 50"><circle cx="17" cy="19" r="8.500" fill="#9cc0e0" stroke="#222" stroke-width="1.500"/><path d="M27 27L34 40L24 37V32Z" fill="#1490fa" stroke="#111"/><path d="M25 27L40 39" stroke="#111" stroke-width="5" stroke-linecap="round"/><path d="M14 20L26 9V14C36 14 38 19 37 28L31 24L26 23V30Z" fill="#1490fa" stroke="#111" stroke-width="1.300"/></symbol>
<symbol id="person" viewBox="0 0 50 50"><path d="M18 33L33 41M32 33L17 41" stroke="#f01" stroke-width="1.500"/><ellipse cx="26" cy="11" rx="2.500" ry="3" fill="#fff" stroke="#111" stroke-width="1.300"/><path d="M24 15L20 20V27L22 28L23 36H29L29 28L31 27V20L28 15Z" fill="#fff" stroke="#111" stroke-width="1.400"/></symbol>
<symbol id="eye" viewBox="0 0 50 50"><path d="M9 21C15 8 28 9 38 17C28 13 17 15 9 21Z" fill="#111"/><path d="M9 25C18 17 28 18 37 29C27 32 17 33 9 25Z" fill="#fff" stroke="#111" stroke-width="2.400"/><circle cx="25" cy="24" r="6" fill="#111"/><circle cx="25" cy="23" r="1.600" fill="#eee"/><path d="M12 31L22 35M26 34L38 32M31 37L40 27M17 34L27 38M36 20L42 21M22 38L28 40" stroke="#999" stroke-width="1.500"/></symbol>
<symbol id="walk" viewBox="0 0 50 50"><g fill="#8e8e8e"><path d="M11 27C8 17 13 10 19 14C23 19 21 24 20 28ZM11 30L20 31C22 37 19 41 15 40C11 39 11 35 11 30Z"/><path d="M27 23C27 14 36 8 39 11C42 18 37 23 35 27ZM26 26L34 29C33 34 29 38 25 36C22 33 25 29 26 26Z"/></g></symbol>
<symbol id="warehouse" viewBox="0 0 50 50"><g fill="none" stroke="#0a62a4" stroke-width="3"><path d="M17 10H32L40 22M9 17V31L22 39M35 20L30 14H21L15 20V30L22 34H29"/><path d="M20 23L25 20L30 23V28L25 31L20 28ZM20 23L25 26L30 23M25 26V31" stroke-width="1.800"/></g><path d="M36 25H42V35H46L39 44L32 35H36Z" fill="#fff" stroke="#0a62a4" stroke-width="1.800"/></symbol>
<symbol id="extensions" viewBox="0 0 50 50"><g id="ext" fill="none" stroke="#0a62a4" stroke-width="3.400"><path d="M9 11C17 11 18 17 25 17C29 17 31 14 34 12M38 10L41 9M9 18C16 18 20 25 25 25C30 25 34 17 41 17M9 31C16 31 19 24 25 24C31 24 34 31 41 31M9 38C17 37 18 31 25 31C32 31 33 37 41 38"/></g></symbol>
<symbol id="layout" viewBox="0 0 50 50"><g fill="none" stroke="#0a62a4" stroke-width="3"><path d="M12 15L26 9L38 15L26 22ZM19 15L26 12L32 15" /><path d="M12 21L26 28L38 21M12 27L26 34L38 27M12 33L26 40"/></g><path d="M30 30H39V26L48 33L39 41V37H30Z" fill="#fff" stroke="#0a62a4" stroke-width="1.800"/></symbol>
<symbol id="extmanager" viewBox="0 0 50 50"><use href="#ext"/><circle cx="35" cy="35" r="8.500" fill="#fff" stroke="#0a62a4" stroke-width="3" stroke-dasharray="4 2.700"/><circle cx="35" cy="35" r="7" fill="#fff" stroke="#0a62a4" stroke-width="1.500"/><circle cx="35" cy="35" r="3" fill="#fff" stroke="#0a62a4" stroke-width="1.500"/></symbol>
</svg>

<header>
<div class="titlebar"><i class="appicon"></i><div class="caption" aria-hidden="true"><span>p</span><span>p</span><span>(</span><span>y</span><span>)</span></div></div>
<nav class="menu"><button>File</button><button>Edit</button><button>View</button><button>Camera</button><button>Draw</button><button>Tools</button><button>Window</button><button>Extensions</button><button>Help</button></nav>
<div class="bar">
<div class="group"><button class="tool" aria-label="Toggle"><svg><use href="#solid-toggle"/></svg></button><button class="tool" aria-label="Section cube"><svg><use href="#solid-section"/></svg></button><hr><button class="tool" aria-label="Sphere"><svg><use href="#solid-sphere"/></svg></button><button class="tool" aria-label="Outer"><svg><use href="#solid-outer"/></svg></button><button class="tool" aria-label="Edge"><svg><use href="#solid-edge"/></svg></button><button class="tool" aria-label="Face"><svg><use href="#solid-face"/></svg></button><button class="tool" aria-label="Undo"><svg><use href="#solid-undo"/></svg></button><hr><button class="tool" aria-label="Scale box"><svg><use href="#wire-scale"/></svg></button><button class="tool" aria-label="Move box"><svg><use href="#wire-move"/></svg></button><button class="tool" aria-label="Rotate box"><svg><use href="#wire-rotate"/></svg></button><hr></div>
<div class="group"><button class="tool" aria-label="Pick axes"><svg><use href="#pick-axes"/></svg></button><button class="tool" aria-label="Pick point"><svg><use href="#pick-point"/></svg></button><button class="tool" aria-label="Pick edge"><svg><use href="#pick-edge"/></svg></button><button class="tool" aria-label="Pick face"><svg><use href="#pick-face"/></svg></button><hr><button class="tool" aria-label="Stretch"><svg><use href="#stretch"/></svg></button></div>
<div class="group"><button class="tool" aria-label="Cloud"><svg><use href="#cloud-line"/></svg></button><button class="tool" aria-label="Search data"><svg><use href="#data-search"/></svg></button><hr><button class="tool" aria-label="Cloud list"><svg><use href="#cloud-list"/></svg></button><button class="tool" aria-label="Cloud solid"><svg><use href="#cloud-solid"/></svg></button><hr><button class="tool" aria-label="Cloud building"><svg><use href="#cloud-building"/></svg></button></div>
<div class="group"><button class="tool" aria-label="Fill dots"><svg><use href="#fill-dots"/></svg></button><button class="tool" aria-label="Fill gradient"><svg><use href="#fill-gradient"/></svg></button><button class="tool" aria-label="Fill plane"><svg><use href="#fill-plane"/></svg></button><button class="tool" aria-label="Fill Z"><svg><use href="#bucketg" x="-3"/><circle cx="35" cy="37" r="11.500" fill="#fff" stroke="#888" stroke-width="1.600"/><text class="zee" x="35" y="44" text-anchor="middle">Z</text></svg></button><button class="tool" aria-label="Fill contrast"><svg><use href="#fill-contrast"/></svg></button><hr><button class="tool" aria-label="Fill flat"><svg><use href="#fill-flat"/></svg></button><hr><button class="tool" aria-label="Fill settings"><svg><use href="#fill-gear"/></svg></button></div>
<div class="group"><button class="tool" aria-label="Open"><svg><use href="#folder"/></svg></button><button class="tool" aria-label="Axes"><svg><use href="#axes-off"/></svg></button><button class="tool" aria-label="Layers"><svg><use href="#layers-off"/></svg></button><button class="tool" aria-label="Add"><svg><use href="#v-add"/></svg></button><button class="tool" aria-label="Remove"><svg><use href="#v-remove"/></svg></button><hr><button class="tool" aria-label="Help"><svg><circle cx="24" cy="25" r="22.500" fill="#f6f6f6" stroke="#fcad17" stroke-width="3"/><text class="query" x="24" y="41" text-anchor="middle">?</text></svg></button></div>
</div>
<div class="bar full">
<div class="group"><button class="tool" aria-label="Save"><svg><use href="#save"/></svg></button></div>
<div class="group"><button class="tool" aria-label="X-ray"><svg><use href="#cube-xray"/></svg></button><button class="tool" aria-label="Back edges"><svg><use href="#cube-back"/></svg></button><hr><button class="tool" aria-label="Wireframe"><svg><use href="#cube-wire"/></svg></button><button class="tool" aria-label="Hidden line"><svg><use href="#cube-hidden"/></svg></button><button class="tool" aria-label="Shaded"><svg><use href="#cube-shaded"/></svg></button><button class="tool on" aria-label="Textures" aria-pressed="true"><svg><use href="#cube-texture"/></svg></button><button class="tool" aria-label="Monochrome"><svg><use href="#cube-mono"/></svg></button></div>
<div class="group"><button class="tool" aria-label="Line"><svg><use href="#pencil"/></svg></button><button class="tool" aria-label="Freehand"><svg><use href="#freehand"/></svg></button><button class="tool" aria-label="Rectangle"><svg><use href="#rect"/></svg></button><button class="tool" aria-label="Rotated rectangle"><svg><use href="#rotrect"/></svg></button><button class="tool" aria-label="Circle"><svg><use href="#circle"/></svg></button><button class="tool" aria-label="Polygon"><svg><use href="#polygon"/></svg></button><button class="tool" aria-label="Arc"><svg><use href="#arc"/></svg></button><button class="tool" aria-label="2 point arc"><svg><use href="#arc2"/></svg></button><button class="tool" aria-label="3 point arc"><svg><use href="#arc3"/></svg></button><button class="tool" aria-label="Pie"><svg><use href="#pie"/></svg></button></div>
<div class="group"><button class="tool" aria-label="Tape measure"><svg><use href="#tape"/></svg></button><button class="tool" aria-label="Dimension"><svg><use href="#dimension"/></svg></button><button class="tool" aria-label="Protractor"><svg><use href="#protractor"/></svg></button><button class="tool" aria-label="Text"><svg><rect x="19" y="9" width="24" height="22" fill="#fff" stroke="#111" stroke-width="1.300"/><text class="a1" x="31" y="24" text-anchor="middle">A1</text><path d="M19 19H15V35" fill="none" stroke="#111" stroke-width="1.300"/><path d="M12 33H18L15 41Z"/></svg></button><button class="tool" aria-label="Axes"><svg><use href="#axes"/></svg></button><button class="tool" aria-label="3D text"><svg><text class="solid-a" x="7" y="39">A</text></svg></button></div>
<div class="group"><button class="tool" aria-label="Move"><svg><use href="#move"/></svg></button><button class="tool" aria-label="Push/Pull"><svg><use href="#pushpull"/></svg></button><button class="tool" aria-label="Rotate"><svg><use href="#rotate"/></svg></button><button class="tool" aria-label="Follow me"><svg><use href="#followme"/></svg></button><button class="tool" aria-label="Scale"><svg><use href="#scale"/></svg></button><button class="tool" aria-label="Offset"><svg><use href="#offset"/></svg></button></div>
<div class="group"><button class="tool" aria-label="Back view"><svg><use href="#house-top"/></svg></button><button class="tool" aria-label="Front view"><svg><use href="#house-front"/></svg></button><button class="tool" aria-label="Top view"><svg><use href="#house-roof"/></svg></button><button class="tool" aria-label="Right view"><svg><use href="#house-right"/></svg></button><button class="tool" aria-label="Left view"><svg><use href="#house-left"/></svg></button></div>
<div class="group"><button class="tool" aria-label="Section plane"><svg><use href="#sectionmark"/><text class="mark" x="25" y="23" text-anchor="middle">C</text><text class="mark" x="25" y="34" text-anchor="middle">A-5</text></svg></button><button class="tool" aria-label="Display planes"><svg><use href="#plane"/></svg></button><button class="tool on" aria-label="Display cuts" aria-pressed="true"><svg><use href="#cut"/></svg></button><button class="tool on" aria-label="Display fill" aria-pressed="true"><svg><use href="#fill"/></svg></button></div>
<div class="group last"><span class="measure">Measurements</span></div>
</div>
</header>

<main>
<aside class="side">
<div class="palette">
<button class="tool on" aria-label="Select" aria-pressed="true"><svg><use href="#select"/></svg></button><button class="tool" aria-label="Component"><svg><use href="#component"/></svg></button>
<button class="tool" aria-label="Paint"><svg><use href="#paint"/></svg></button><button class="tool" aria-label="Eraser"><svg><path d="M9 26L27 7L41 10V17L24 42L8 34Z" fill="#f88ca0" stroke="#111" stroke-width="1.600"/><path d="M9 26L27 7L41 10L25 31Z" fill="#fab0bc"/><path d="M9 26L25 31L24 42M25 31L41 10" fill="none" stroke="#b04860"/><text class="pink" x="24" y="28" transform="rotate(-62 24 28)">Pink</text></svg></button>
<hr>
<button class="tool" aria-label="Line"><svg><use href="#pencil"/></svg></button><button class="tool" aria-label="Freehand"><svg><use href="#freehand"/></svg></button>
<button class="tool" aria-label="Rectangle"><svg><use href="#rect"/></svg></button><button class="tool" aria-label="Rotated rectangle"><svg><use href="#rotrect"/></svg></button>
<button class="tool" aria-label="Circle"><svg><use href="#circle"/></svg></button><button class="tool" aria-label="Polygon"><svg><use href="#polygon"/></svg></button>
<button class="tool" aria-label="Arc"><svg><use href="#arc"/></svg></button><button class="tool" aria-label="2 point arc"><svg><use href="#arc2"/></svg></button>
<button class="tool" aria-label="3 point arc"><svg><use href="#arc3"/></svg></button><button class="tool" aria-label="Pie"><svg><use href="#pie"/></svg></button>
<hr>
<button class="tool" aria-label="Move"><svg><use href="#move"/></svg></button><button class="tool" aria-label="Push/Pull"><svg><use href="#pushpull"/></svg></button>
<button class="tool" aria-label="Rotate"><svg><use href="#rotate"/></svg></button><button class="tool" aria-label="Follow me"><svg><use href="#followme"/></svg></button>
<button class="tool" aria-label="Scale"><svg><use href="#scale"/></svg></button><button class="tool" aria-label="Offset"><svg><use href="#offset"/></svg></button>
<hr>
<button class="tool" aria-label="Tape measure"><svg><use href="#tape"/></svg></button><button class="tool" aria-label="Dimension"><svg><use href="#dimension"/></svg></button>
<button class="tool" aria-label="Protractor"><svg><use href="#protractor"/></svg></button><button class="tool" aria-label="Text"><svg><rect x="19" y="9" width="24" height="22" fill="#fff" stroke="#111" stroke-width="1.300"/><text class="a1" x="31" y="24" text-anchor="middle">A1</text><path d="M19 19H15V35" fill="none" stroke="#111" stroke-width="1.300"/><path d="M12 33H18L15 41Z"/></svg></button>
<button class="tool" aria-label="Axes"><svg><use href="#axes"/></svg></button><button class="tool" aria-label="3D text"><svg><text class="solid-a" x="7" y="39">A</text></svg></button>
<hr>
<button class="tool" aria-label="Orbit"><svg><use href="#orbit"/></svg></button><button class="tool" aria-label="Pan"><svg><use href="#pan"/></svg></button>
<button class="tool" aria-label="Zoom"><svg><use href="#zoom"/></svg></button><button class="tool" aria-label="Zoom window"><svg><use href="#zoomwin"/></svg></button>
<button class="tool" aria-label="Zoom extents"><svg><use href="#zoomext"/></svg></button><button class="tool" aria-label="Previous view"><svg><use href="#zoomprev"/></svg></button>
<hr>
<button class="tool" aria-label="Position camera"><svg><use href="#person"/></svg></button><button class="tool" aria-label="Look around"><svg><use href="#eye"/></svg></button>
<button class="tool" aria-label="Walk"><svg><use href="#walk"/></svg></button><button class="tool" aria-label="Section plane"><svg><use href="#sectionmark"/><text class="mark" x="25" y="23" text-anchor="middle">C</text><text class="mark" x="25" y="34" text-anchor="middle">A-5</text></svg></button>
<hr>
<button class="tool" aria-label="3D Warehouse"><svg><use href="#warehouse"/></svg></button><button class="tool" aria-label="Extension Warehouse"><svg><use href="#extensions"/></svg></button>
<button class="tool" aria-label="Send to LayOut"><svg><use href="#layout"/></svg></button><button class="tool" aria-label="Extension manager"><svg><use href="#extmanager"/></svg></button>
</div>
</aside>
<section class="viewport" aria-label="Model">
<svg class="model" shape-rendering="crispEdges">
<path d="M0 188L964 0" stroke="#14b414" fill="none"/>
<path d="M617 747V762L873 1152L879 1151L875 1142Z" fill="#bebebe" stroke="#000"/>
<path d="M617 747L807 460L1192 385L1221 1137L911 1197Z" fill="#ececec" stroke="#000"/>
<path d="M879 1151L910 1199L1221 1140V1137M911 1197V1199M875 1144V1152" fill="none" stroke="#000"/>
<path d="M1217 340H1194L1192 376M1190 1102H1214L1220 1130" fill="none" stroke="#444"/>
<path d="M1188 376H1196L1192 385ZM1217 1129H1224L1221 1137Z" fill="#444"/>
<g class="note"><text x="1229" y="350">A</text><text x="1163" y="1112">B</text></g>
</svg>
</section>
</main>
</body>
</html>
```
FILE: styles.css
```css
* { box-sizing: border-box; }
body {
  margin: 0;
  min-height: 100vh;
  display: flex;
  flex-direction: column;
  background: #f0f0f0;
  color: #000;
  font: 16px/20px "Open Sans", "Noto Sans", sans-serif;
}
button { font: inherit; color: inherit; border: 0; padding: 0; background: none; }
.sprite { position: absolute; width: 0; height: 0; }

.titlebar { height: 3px; overflow: hidden; background: #fff; display: flex; }
.appicon { flex: none; width: 24px; height: 3px; margin-left: 2px; background: #d8e8f4; border: 1px solid #a8c8e0; border-top: 0; }
.caption {
  display: grid;
  grid-template-columns: 108px 94px 48px 116px 20px;
  padding-left: 70px;
  margin-top: -17px;
}
.menu { display: flex; gap: 13px; height: 35px; padding: 5px 7px 0; background: #fff; align-items: center; font-size: 17px; }

.bar { display: flex; height: 54px; }
.full { border-bottom: 1px solid #a8a8ac; }
.group {
  display: flex;
  flex: none;
  padding: 1px 0 1px 11px;
  background: radial-gradient(circle, #b4b4b4 1px, transparent 2px) 4px 3px / 4px 6px repeat-y, #f2f2f2;
  border-right: 1px solid #a8a8ac;
  border-bottom: 1px solid #a8a8ac;
  border-top: 1px solid #f6f6fa;
}
.full .group { border-bottom: 0; }
.last { flex: 1; border-right: 0; align-items: center; }
.measure { padding-left: 4px; }
.tool { width: 50px; height: 50px; flex: none; display: block; }
.tool svg { display: block; width: 50px; height: 50px; }
.tool.on { background: #c3ddf3; box-shadow: inset 0 0 0 1px #90c8f6; }
.group hr { width: 1px; height: 46px; margin: 2px 6px 0 1px; border: 0; background: #8c8c8c; flex: none; }

.zee { font: 700 19px Roboto, sans-serif; fill: #888; }
.query { font: 500 44px Roboto, sans-serif; fill: #fff; stroke: #a8a8a8; }
.a1 { font: 15px "Liberation Serif", serif; }
.mark { font: 9px "Liberation Serif", serif; }
.pink { font: 700 9px "Liberation Serif", serif; }
.solid-a { font: 700 43px "Liberation Serif", serif; fill: #8c8a76; stroke: #111; stroke-width: 2px; }

main { flex: 1; display: flex; }
.side { flex: none; width: 104px; padding-top: 54px; }
.palette {
  display: grid;
  grid-template-columns: 50px 50px;
  padding: 10px 0 0 2px;
  border-right: 1px solid #a8a8ac;
  border-bottom: 1px solid #a8a8ac;
  background: radial-gradient(circle, #b4b4b4 1px, transparent 2px) 2px 3px / 6px 4px repeat-x, #f2f2f2;
}
.palette hr { grid-column: span 2; width: 96px; height: 1px; margin: 2px 2px 5px; border: 0; background: #8c8c8c; }
.viewport {
  flex: 1;
  min-width: 0;
  display: flex;
  background: #fefefb;
  border: solid #696969;
  border-width: 1px 0 0 1px;
  box-shadow: -1px 0 0 #a0a0a0;
  margin-left: 1px;
  padding-top: 1px;
}
.model { flex: 1; width: 100%; min-height: 1240px; display: block; }
.note { font: 24px "Open Sans", sans-serif; fill: #505050; }
```
